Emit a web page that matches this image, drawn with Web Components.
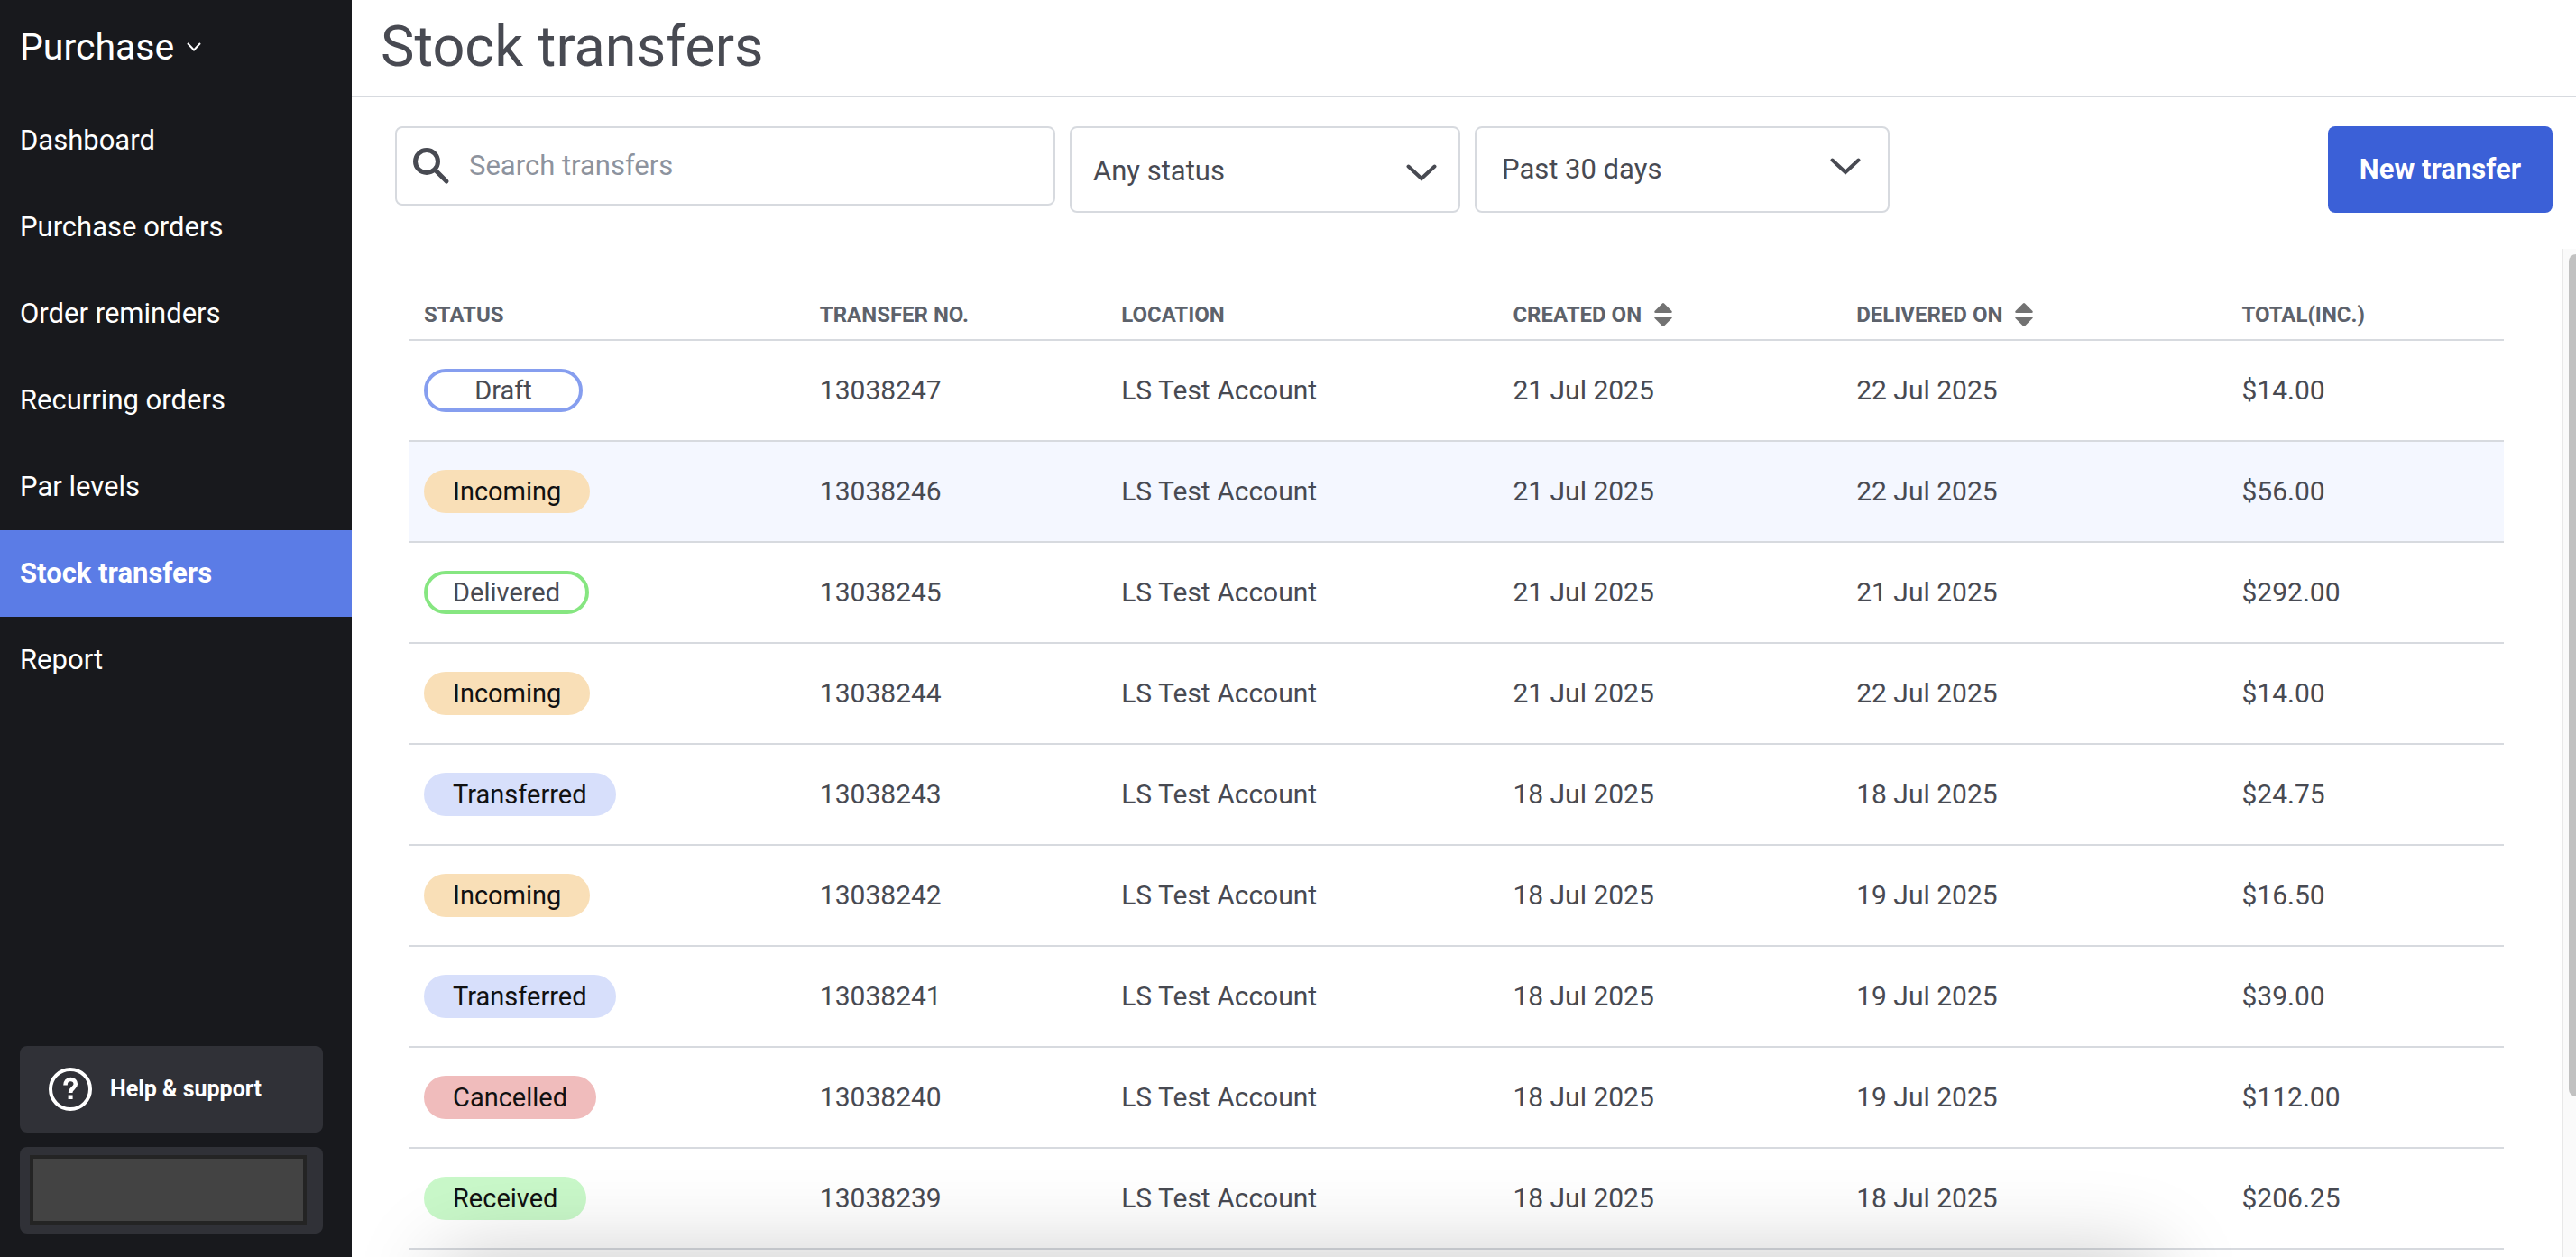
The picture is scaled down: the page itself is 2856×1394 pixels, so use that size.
<!DOCTYPE html>
<html lang="en">
<head>
<meta charset="utf-8">
<title>Stock transfers</title>
<style>
html,body{margin:0;height:100%}
body{font-family:Roboto,"Liberation Sans",sans-serif;font-size:31px;line-height:36px;color:#484a52;background:#fff}
</style>
</head>
<body>
<app-shell>
  <side-bar slot="sidebar">
    <nav-item>Dashboard</nav-item>
    <nav-item>Purchase orders</nav-item>
    <nav-item>Order reminders</nav-item>
    <nav-item>Recurring orders</nav-item>
    <nav-item>Par levels</nav-item>
    <nav-item current>Stock transfers</nav-item>
    <nav-item>Report</nav-item>
  </side-bar>
  <page-header slot="header">Stock transfers</page-header>
  <filter-bar slot="filters">
    <search-field></search-field>
    <select-field class="status" label="Status" option="Any status"></select-field>
    <select-field class="period" label="Period" option="Past 30 days"></select-field>
    <primary-button>New transfer</primary-button>
  </filter-bar>
  <scroll-pane>
    <transfers-table></transfers-table>
  </scroll-pane>
</app-shell>

<script>
const define = (name, html, setup) => {
  const template = document.createElement('template');
  template.innerHTML = '<style>:host,*{box-sizing:border-box}button,input,select{font:inherit}</style>' + html;
  customElements.define(name, class extends HTMLElement {
    constructor() {
      super();
      this.attachShadow({ mode: 'open' }).append(template.content.cloneNode(true));
    }
    connectedCallback() {
      if (setup) setup(this, this.shadowRoot);
    }
  });
};

define('app-shell', `
<style>
:host{display:flex;height:100vh;overflow:hidden;position:relative}
main{flex:1;min-width:0;display:flex;flex-direction:column}
.dock{position:absolute;left:506px;right:482px;top:100%;height:80px;box-shadow:0 16px 96px 16px rgba(0,0,0,.22);pointer-events:none}
</style>
<slot name="sidebar"></slot>
<main><slot name="header"></slot><slot name="filters"></slot><slot></slot></main>
<div class="dock"></div>`);

define('side-bar', `
<style>
:host{display:flex;flex-direction:column;flex:none;width:390px;background:#18191d;color:#fff;z-index:1}
.switch{display:flex;align-items:center;gap:14px;height:104px;padding:0 22px;border:0;background:none;color:inherit;font-size:41px;line-height:48px;cursor:pointer}
nav{display:flex;flex-direction:column;margin-top:4px;flex:1}
.foot{display:flex;flex-direction:column;gap:16px;padding:0 32px 26px 22px}
.card{display:flex;align-items:center;height:96px;border:0;border-radius:8px;background:#303137;color:inherit}
.help{gap:20px;padding:0 32px;font-size:25px;font-weight:700;text-decoration:none}
.account{padding:9px 18px 10px 11px}
.account span{flex:1;align-self:stretch;background:#434343;border:4px solid #242424}
</style>
<button class="switch">Purchase<svg width="16" height="10" viewBox="0 0 16 10" fill="none" stroke="#fff" stroke-width="2"><path d="M1 1l7 7.5L15 1"/></svg></button>
<nav><slot></slot></nav>
<div class="foot">
  <a class="card help" href="#help"><svg width="48" height="48" viewBox="0 0 48 48" fill="none" stroke="#fff"><circle cx="24" cy="24" r="22" stroke-width="4"/><path d="M18.500 19.500c0-4 2.400-6.500 5.700-6.500s5.600 2.200 5.600 5.300c0 4.600-5.700 4.600-5.700 9.700" stroke-width="4.600"/><path d="M24.100 30.500v4.500" stroke-width="5"/></svg>Help &amp; support</a>
  <button class="card account" aria-label="Account"><span></span></button>
</div>`);

define('nav-item', `
<style>
a{display:flex;align-items:center;height:96px;padding:0 22px;color:#fff;text-decoration:none}
:host{display:block}
:host([current]) a{background:#5b7ce6;font-weight:700}
</style>
<a href="#"><slot></slot></a>`);

define('page-header', `
<style>
:host{display:block;border-bottom:2px solid #d7dadf;padding:16px 32px 18px}
h1{margin:0;font-size:63px;line-height:72px;font-weight:400}
</style>
<h1><slot></slot></h1>`);

define('filter-bar', `
<style>
:host{display:flex;align-items:flex-start;gap:16px;padding:32px 26px 40px 48px}
::slotted(search-field){flex:0 1 732px}
::slotted(.status){flex:0 1 433px;--pad:4px 24px 0;--mark:6px 24px 0 0}
::slotted(.period){flex:0 1 460px;--pad:0 28px;--mark:0 30px 8px 0}
::slotted(primary-button){margin-left:auto}
</style>
<slot></slot>`);

define('search-field', `
<style>
:host{display:block}
label{display:flex;align-items:center;gap:20px;height:88px;padding:0 18px;border:2px solid #d7dadf;border-radius:8px}
input{flex:1;min-width:0;border:0;outline:0;padding:0;background:none;color:inherit}
input::placeholder{color:#8d939e;opacity:1}
svg{flex:none}
</style>
<label><svg width="42" height="42" viewBox="0 0 42 42" fill="none" stroke="#484a52"><circle cx="15" cy="16" r="12.500" stroke-width="5"/><path d="M24.500 25.500l12.500 12.500" stroke-width="5" stroke-linecap="round"/></svg><input type="search" aria-label="Search transfers" placeholder="Search transfers"></label>`);

define('select-field', `
<style>
:host{display:grid;height:96px;border:2px solid #d7dadf;border-radius:8px}
select,svg{grid-area:1/1}
select{appearance:none;width:100%;height:100%;border:0;border-radius:8px;padding:var(--pad);background:none;color:inherit}
svg{place-self:center end;margin:var(--mark);pointer-events:none}
</style>
<select><option></option></select>
<svg width="34" height="19" viewBox="0 0 34 19" fill="none" stroke="#484a52" stroke-width="4" stroke-linecap="round"><path d="M2.500 2.500L17 16 31.500 2.500"/></svg>`,
(el, root) => {
  root.querySelector('select').setAttribute('aria-label', el.getAttribute('label'));
  root.querySelector('option').textContent = el.getAttribute('option');
});

define('primary-button', `
<style>
:host{display:block}
button{height:96px;padding:0 35px;border:0;border-radius:8px;background:#3b60d7;color:#fff;font-weight:700;cursor:pointer}
</style>
<button><slot></slot></button>`);

define('scroll-pane', `
<style>
:host{display:flex;flex:1;min-height:0}
.view{flex:1;min-width:0;overflow:hidden;padding:46px 64px 0}
.track{flex:none;width:16px;border-left:2px solid #e8e8e8;background:#fafafa;overflow:hidden;padding:6px 0 0 6px}
.thumb{width:16px;height:84%;border-radius:8px;background:#c1c1c1}
</style>
<div class="view"><slot></slot></div>
<div class="track"><div class="thumb"></div></div>`);

define('status-badge', `
<style>
:host{display:inline-flex;align-items:center;justify-content:center;height:48px;min-width:176px;padding:0 28px;border:4px solid transparent;border-radius:24px;font-size:29px;line-height:32px;color:#111;vertical-align:middle}
:host([kind=Draft]){border-color:#869eef;color:#484a52}
:host([kind=Delivered]){border-color:#86e681;color:#484a52}
:host([kind=Incoming]){background-color:#f9dfb7}
:host([kind=Transferred]){background-color:#d7dffb}
:host([kind=Cancelled]){background-color:#f0bcbc}
:host([kind=Received]){background-color:#c9f8c9}
</style>
<slot></slot>`);

define('sort-button', `
<style>
:host{display:inline-block}
button{display:flex;align-items:center;gap:14px;padding:0;border:0;background:none;color:inherit;cursor:pointer}
</style>
<button><slot></slot><svg width="20" height="26" viewBox="0 0 20 26" fill="#727272"><path d="M9 .500q1-1 2 0l8.500 8.500q.800 2-1 2h-17q-1.800 0-1-2z"/><path d="M9 25.500q1 1 2 0l8.500-8.500q.800-2-1-2h-17q-1.800 0-1 2z"/></svg></button>`);

const transfers = [
  ['Draft', '13038247', '21 Jul 2025', '22 Jul 2025', '$14.00'],
  ['Incoming', '13038246', '21 Jul 2025', '22 Jul 2025', '$56.00'],
  ['Delivered', '13038245', '21 Jul 2025', '21 Jul 2025', '$292.00'],
  ['Incoming', '13038244', '21 Jul 2025', '22 Jul 2025', '$14.00'],
  ['Transferred', '13038243', '18 Jul 2025', '18 Jul 2025', '$24.75'],
  ['Incoming', '13038242', '18 Jul 2025', '19 Jul 2025', '$16.50'],
  ['Transferred', '13038241', '18 Jul 2025', '19 Jul 2025', '$39.00'],
  ['Cancelled', '13038240', '18 Jul 2025', '19 Jul 2025', '$112.00'],
  ['Received', '13038239', '18 Jul 2025', '18 Jul 2025', '$206.25']
];

define('transfers-table', `
<style>
:host{display:block}
table{width:100%;table-layout:fixed;border-collapse:separate;border-spacing:0;font-size:30px}
th,td{padding:0 16px;text-align:left;border-bottom:2px solid #d7dadf}
th{height:56px;font-size:24px;line-height:28px;font-weight:700;color:#5d626b}
td{height:112px}
tr.hover td{background:#f4f7ff}
</style>
<table>
<colgroup><col style="width:18.9%"><col style="width:14.4%"><col style="width:18.7%"><col style="width:16.4%"><col style="width:18.4%"><col></colgroup>
<thead><tr><th>STATUS</th><th>TRANSFER NO.</th><th>LOCATION</th><th><sort-button>CREATED ON</sort-button></th><th><sort-button>DELIVERED ON</sort-button></th><th>TOTAL(INC.)</th></tr></thead>
<tbody></tbody>
</table>`,
(el, root) => {
  root.querySelector('tbody').innerHTML = transfers.map(([status, no, created, delivered, total], i) =>
    `<tr${i === 1 ? ' class="hover"' : ''}><td><status-badge kind="${status}">${status}</status-badge></td><td>${no}</td><td>LS Test Account</td><td>${created}</td><td>${delivered}</td><td>${total}</td></tr>`).join('');
});
</script>
</body>
</html>
